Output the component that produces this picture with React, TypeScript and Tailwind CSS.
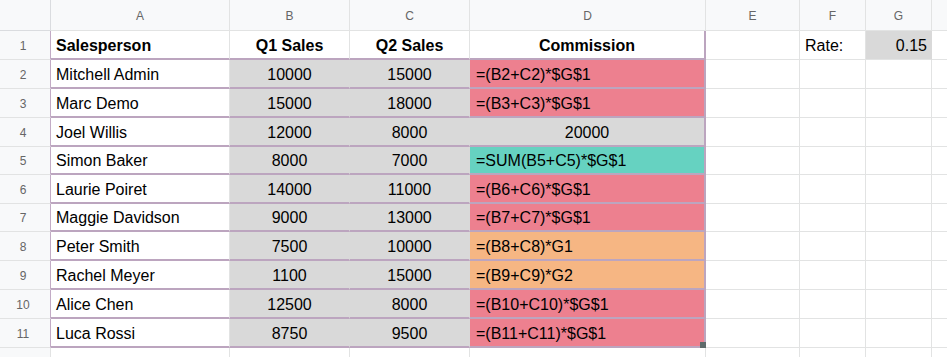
import React from "react";

type Fill = "pink" | "teal" | "orange" | "gray";

type Row = {
  a: string;
  b: string;
  c: string;
  d: string;
  fill?: Fill;
  head?: boolean;
};

const rows: Row[] = [
  { a: "Salesperson", b: "Q1 Sales", c: "Q2 Sales", d: "Commission", head: true },
  { a: "Mitchell Admin", b: "10000", c: "15000", d: "=(B2+C2)*$G$1", fill: "pink" },
  { a: "Marc Demo", b: "15000", c: "18000", d: "=(B3+C3)*$G$1", fill: "pink" },
  { a: "Joel Willis", b: "12000", c: "8000", d: "20000", fill: "gray" },
  { a: "Simon Baker", b: "8000", c: "7000", d: "=SUM(B5+C5)*$G$1", fill: "teal" },
  { a: "Laurie Poiret", b: "14000", c: "11000", d: "=(B6+C6)*$G$1", fill: "pink" },
  { a: "Maggie Davidson", b: "9000", c: "13000", d: "=(B7+C7)*$G$1", fill: "pink" },
  { a: "Peter Smith", b: "7500", c: "10000", d: "=(B8+C8)*G1", fill: "orange" },
  { a: "Rachel Meyer", b: "1100", c: "15000", d: "=(B9+C9)*G2", fill: "orange" },
  { a: "Alice Chen", b: "12500", c: "8000", d: "=(B10+C10)*$G$1", fill: "pink" },
  { a: "Luca Rossi", b: "8750", c: "9500", d: "=(B11+C11)*$G$1", fill: "pink" },
];

const heights = [
  "h-[29px]",
  "h-[29px]",
  "h-[29px]",
  "h-[29px]",
  "h-[28px]",
  "h-[29px]",
  "h-[28px]",
  "h-[29px]",
  "h-[29px]",
  "h-[29px]",
  "h-[29px]",
];

const fillBg: Record<Fill, string> = {
  pink: "bg-[#ed808f]",
  teal: "bg-[#66d2c1]",
  orange: "bg-[#f6b683]",
  gray: "bg-[#d9d9d9]",
};

const cols = [
  { key: "A", w: "w-[179px]" },
  { key: "B", w: "w-[120px]" },
  { key: "C", w: "w-[120px]" },
  { key: "D", w: "w-[236px]" },
  { key: "E", w: "w-[94px]" },
  { key: "F", w: "w-[66px]" },
  { key: "G", w: "w-[66px]" },
  { key: "", w: "w-[80px]" },
];

const grid = "border-r border-b border-[#e2e3e3]";

export default function App() {
  return (
    <div className="w-[947px] h-[357px] overflow-hidden bg-white font-['Liberation_Sans',Arial,sans-serif] text-[16px] text-black">
      {/* column letters */}
      <div className="flex h-[31px]">
        <div className="w-[51px] shrink-0 bg-[#f8f9fa] border-r border-b border-[#dadcdf]" />
        {cols.map((c, i) => (
          <div
            key={i}
            className={`${c.w} shrink-0 bg-[#f8f9fa] border-r border-b border-[#e2e3e3] flex items-center justify-center pt-[1px] text-[12px] text-[#666]`}
          >
            {c.key}
          </div>
        ))}
      </div>

      {rows.map((r, i) => {
        const h = heights[i];
        const tb = "border-b-2 border-b-[#bca5bf] pt-[2px]";
        const bc = r.head ? "bg-white" : "bg-[#d9d9d9]";
        const dc = r.head ? "bg-white" : fillBg[r.fill ?? "pink"];
        return (
          <div key={i} className={`flex ${h}`}>
            <div className="w-[51px] shrink-0 bg-[#f8f9fa] border-r border-r-[#c2abc5] border-b border-b-[#e2e3e3] flex items-center justify-center pr-[4px] pt-[1px] text-[12px] text-[#666]">
              {i + 1}
            </div>
            <div
              className={`w-[179px] shrink-0 bg-white border-r border-r-[#e2e3e3] ${tb} flex items-center pl-[5px] ${
                r.head ? "font-bold" : ""
              }`}
            >
              {r.a}
            </div>
            <div
              className={`w-[120px] shrink-0 ${bc} border-r ${
                r.head ? "border-r-[#e2e3e3]" : "border-r-[#d9d9d9]"
              } ${tb} flex items-center justify-center ${r.head ? "font-bold" : ""}`}
            >
              {r.b}
            </div>
            <div
              className={`w-[120px] shrink-0 ${bc} border-r ${
                r.head ? "border-r-[#e2e3e3]" : "border-r-[#d9d9d9]"
              } ${tb} flex items-center justify-center ${r.head ? "font-bold" : ""}`}
            >
              {r.c}
            </div>
            <div
              className={`relative w-[236px] shrink-0 ${dc} border-r-2 border-r-[#bca5bf] ${tb} flex items-center ${
                r.head || r.fill === "gray" ? "justify-center" : "pl-[6px]"
              } ${r.head ? "font-bold" : ""}`}
            >
              {r.d}
              {i === rows.length - 1 && (
                <span className="absolute right-[-2px] bottom-[-2px] w-[6px] h-[6px] bg-[#5f6b6b]" />
              )}
            </div>
            <div className={`w-[94px] shrink-0 ${grid}`} />
            <div className={`w-[66px] shrink-0 ${grid} flex items-center pl-[5px] pt-[2px]`}>
              {i === 0 ? "Rate:" : ""}
            </div>
            <div
              className={`w-[66px] shrink-0 ${grid} flex items-center justify-end pr-[4px] pt-[2px] ${
                i === 0 ? "bg-[#d9d9d9] border-r-[#d9d9d9]" : ""
              }`}
            >
              {i === 0 ? "0.15" : ""}
            </div>
            <div className={`w-[80px] shrink-0 ${grid}`} />
          </div>
        );
      })}

      {/* partial row 12 */}
      <div className="flex h-[29px]">
        <div className="w-[51px] shrink-0 bg-[#f8f9fa] border-r border-b border-[#e2e3e3] flex items-center justify-center pr-[4px] text-[12px] text-[#666]">
          12
        </div>
        {cols.map((c, i) => (
          <div key={i} className={`${c.w} shrink-0 ${grid}`} />
        ))}
      </div>
    </div>
  );
}
